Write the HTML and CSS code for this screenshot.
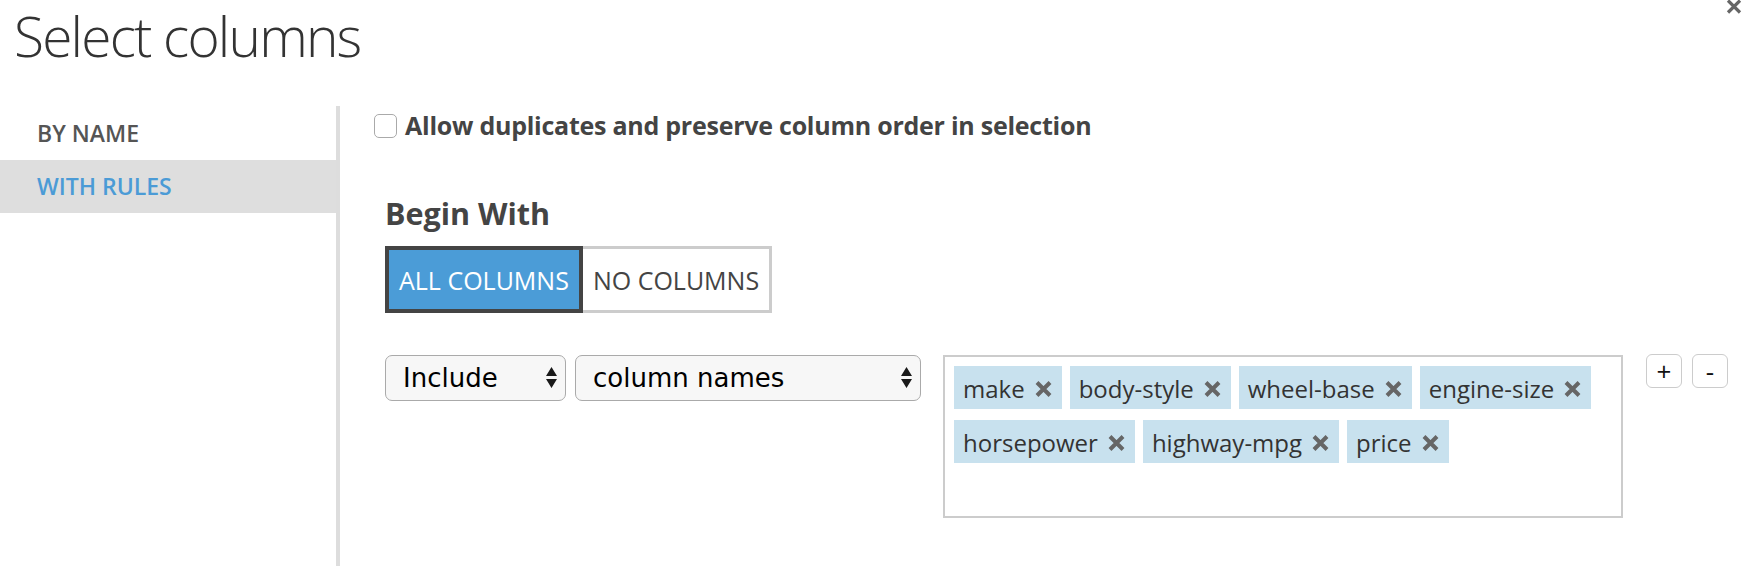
FILE: index.html
```html
<!DOCTYPE html>
<html lang="en">
<head>
    <meta charset="UTF-8">
    <title>Select columns</title>
    <link rel="stylesheet" href="styles.css">
</head>
<body>
    <!-- 标题栏 -->
    <div class="head">
        <h1 class="title">Select columns</h1>
        <button type="button" class="close" title="Close">
            <svg width="16" height="15" viewBox="0 0 16 15"><path d="M2 1.5 L14 13.5 M14 1.5 L2 13.5" stroke="#666" stroke-width="3.2"/></svg>
        </button>
    </div>

    <div class="main">
        <!-- 左边菜单 -->
        <ul class="side">
            <li class="tab">BY NAME</li>
            <li class="tab active">WITH RULES</li>
        </ul>

        <!-- 右边内容 -->
        <div class="content">
            <label class="dup">
                <input type="checkbox" class="check">
                <span class="dup-text">Allow duplicates and preserve column order in selection</span>
            </label>

            <div class="rules">
                <h2 class="sub">Begin With</h2>
                <div class="toggle">
                    <button type="button" class="tbtn on">ALL COLUMNS</button>
                    <button type="button" class="tbtn">NO COLUMNS</button>
                </div>

                <div class="rule">
                    <span class="pick pick-sm">
                        <select class="sel"><option>Include</option><option>Exclude</option></select>
                        <svg class="arrow" width="11" height="21" viewBox="0 0 11 21"><path d="M0 9 L5.5 0 L11 9 Z M0 12 L5.5 21 L11 12 Z" fill="#1a1a1a"/></svg>
                    </span>
                    <span class="pick pick-lg">
                        <select class="sel"><option>column names</option><option>column type</option></select>
                        <svg class="arrow" width="11" height="21" viewBox="0 0 11 21"><path d="M0 9 L5.5 0 L11 9 Z M0 12 L5.5 21 L11 12 Z" fill="#1a1a1a"/></svg>
                    </span>

                    <div class="tags">
                        <span class="tag">make<svg class="x" width="17" height="16" viewBox="0 0 17 16"><path d="M2 1.5 L15 14.5 M15 1.5 L2 14.5" stroke="#666" stroke-width="4"/></svg></span>
                        <span class="tag">body-style<svg class="x" width="17" height="16" viewBox="0 0 17 16"><path d="M2 1.5 L15 14.5 M15 1.5 L2 14.5" stroke="#666" stroke-width="4"/></svg></span>
                        <span class="tag">wheel-base<svg class="x" width="17" height="16" viewBox="0 0 17 16"><path d="M2 1.5 L15 14.5 M15 1.5 L2 14.5" stroke="#666" stroke-width="4"/></svg></span>
                        <span class="tag">engine-size<svg class="x" width="17" height="16" viewBox="0 0 17 16"><path d="M2 1.5 L15 14.5 M15 1.5 L2 14.5" stroke="#666" stroke-width="4"/></svg></span>
                        <span class="tag">horsepower<svg class="x" width="17" height="16" viewBox="0 0 17 16"><path d="M2 1.5 L15 14.5 M15 1.5 L2 14.5" stroke="#666" stroke-width="4"/></svg></span>
                        <span class="tag">highway-mpg<svg class="x" width="17" height="16" viewBox="0 0 17 16"><path d="M2 1.5 L15 14.5 M15 1.5 L2 14.5" stroke="#666" stroke-width="4"/></svg></span>
                        <span class="tag">price<svg class="x" width="17" height="16" viewBox="0 0 17 16"><path d="M2 1.5 L15 14.5 M15 1.5 L2 14.5" stroke="#666" stroke-width="4"/></svg></span>
                    </div>

                    <div class="pm">
                        <button type="button" class="small">+</button>
                        <button type="button" class="small">-</button>
                    </div>
                </div>
            </div>
        </div>
    </div>
</body>
</html>
```

FILE: styles.css
```css
/* 整体 */
html, body{
    margin: 0;
    height: 100%;
}
body{
    display: flex;
    flex-direction: column;
    font-family: "Open Sans", "Noto Sans", sans-serif;
    color: #333;
    background: #fff;
}
/* 标题 */
.head{
    height: 106px;
    flex: none;
    display: flex;
    justify-content: space-between;
    align-items: flex-start;
    padding: 0 8px 0 14px;
}
.title{
    margin: 0;
    font-size: 55px;
    line-height: 72px;
    font-weight: 300;
    letter-spacing: -1.8px;
    color: #333;
}
.close{
    border: none;
    background: none;
    padding: 0;
    margin-top: -1px;
    width: 16px;
    height: 15px;
    cursor: pointer;
}
.close svg{
    display: block;
}
.main{
    flex: 1;
    display: flex;
}
/* 左边菜单 */
.side{
    list-style: none;
    margin: 0;
    padding: 1px 0 0 0;
    width: 336px;
    border-right: 4px solid #ddd;
}
.tab{
    height: 53px;
    line-height: 53px;
    padding-left: 37px;
    font-size: 23px;
    font-weight: 600;
    color: #555;
    cursor: pointer;
}
.tab.active{
    background-color: #dedede;
    color: #4b9bd6;
}
/* 右边 */
.content{
    flex: 1;
    padding-left: 34px;
}
.dup{
    display: flex;
    align-items: center;
    height: 40px;
    gap: 8px;
    font-size: 25px;
    font-weight: 700;
    letter-spacing: -0.25px;
    color: #444;
}
.dup-text{
    padding-bottom: 3px;
}
.check{
    appearance: none;
    margin: 0;
    width: 23px;
    height: 24px;
    border: 1.5px solid #aaa;
    border-radius: 5px;
    background: #fff;
}
.rules{
    margin-left: 11px;
}
.sub{
    margin: 47px 0 13px 0;
    font-size: 30.5px;
    line-height: 40px;
    font-weight: 700;
    color: #444;
}
.toggle{
    display: flex;
}
.tbtn{
    height: 67px;
    box-sizing: border-box;
    padding: 0 10px;
    font-family: "Open Sans", "Noto Sans", sans-serif;
    font-size: 25px;
    color: #444;
    background: #fff;
    border: 3px solid #ccc;
    border-left: none;
    cursor: pointer;
}
.tbtn.on{
    background-color: #4b9cd7;
    color: #fff;
    border: 4px solid #444;
}
/* 规则那一行 */
.rule{
    display: flex;
    align-items: flex-start;
    margin-top: 42px;
}
.pick{
    position: relative;
    display: block;
}
.pick-sm{
    width: 181px;
}
.pick-lg{
    width: 346px;
    margin-left: 9px;
}
.sel{
    appearance: none;
    width: 100%;
    height: 46px;
    box-sizing: border-box;
    padding: 0 0 0 17px;
    font-family: "DejaVu Sans", Verdana, sans-serif;
    font-size: 26px;
    color: #000;
    background: #f7f7f7;
    border: 1.5px solid #aaa;
    border-radius: 7px;
}
/* 上下小箭头盖在select上面 */
.arrow{
    position: absolute;
    right: 9px;
    top: 12px;
    pointer-events: none;
}
.tags{
    width: 680px;
    height: 163px;
    box-sizing: border-box;
    margin-left: 22px;
    padding: 9px;
    border: 2px solid #ccc;
    display: flex;
    flex-wrap: wrap;
    align-content: flex-start;
    gap: 11px 8px;
}
.tag{
    display: flex;
    align-items: center;
    gap: 10px;
    height: 43px;
    box-sizing: border-box;
    padding: 3px 10px 0 9px;
    line-height: 40px;
    font-size: 24px;
    color: #333;
    background-color: #c8e1ee;
}
.x{
    display: block;
    cursor: pointer;
}
.pm{
    display: flex;
    gap: 10px;
    margin-left: 23px;
    margin-top: -1px;
}
.small{
    width: 36px;
    height: 34px;
    padding: 0;
    font-family: "Open Sans", "Noto Sans", sans-serif;
    font-size: 26px;
    line-height: 30px;
    color: #111;
    background: #fff;
    border: 1.5px solid #ccc;
    border-radius: 6px;
    cursor: pointer;
}
```
